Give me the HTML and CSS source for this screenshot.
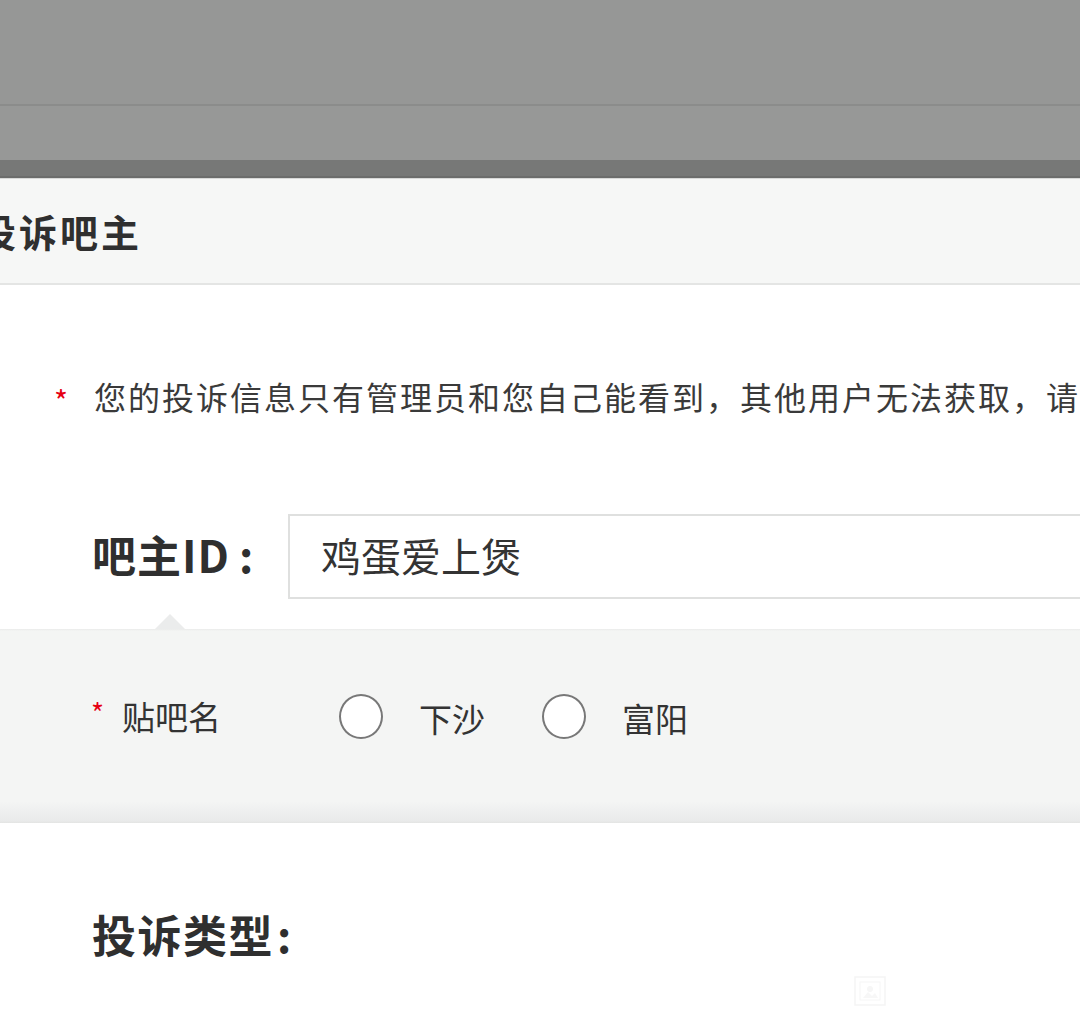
FILE: index.html
```html
<!DOCTYPE html>
<html lang="zh-CN">
<head>
<meta charset="utf-8">
<link rel="stylesheet" href="styles.css">
</head>
<body>
<div class="page">
  <div class="mask-top"></div>
  <div class="mask-mid"></div>
  <div class="mask-band"></div>
  <header class="dialog-head">
    <h1 class="dialog-title">投诉吧主</h1>
  </header>
  <section class="main">
    <p class="notice"><span class="star">*</span><span class="notice-text">您的投诉信息只有管理员和您自己能看到，其他用户无法获取，请放心填写</span></p>
    <div class="id-row">
      <span class="id-label">吧主ID<span class="colon">:</span></span>
      <div class="id-input">鸡蛋爱上煲</div>
    </div>
  </section>
  <section class="panel">
    <div class="radio-row">
      <span class="star-small">*</span><span class="radio-label">贴吧名</span>
      <span class="radio"></span><span class="radio-text">下沙</span>
      <span class="radio"></span><span class="radio-text">富阳</span>
    </div>
  </section>
  <section class="type">
    <span class="type-label">投诉类型<span class="colon type-colon">:</span></span>
    <svg class="placeholder" width="32" height="30" viewBox="0 0 32 30">
      <rect x="1" y="1" width="30" height="28" fill="none" stroke="#f5f5f5" stroke-width="1.5"/>
      <rect x="6" y="6" width="20" height="18" fill="none" stroke="#f6f6f6" stroke-width="1"/>
      <circle cx="16" cy="13" r="3" fill="#f6f6f6"/>
      <path d="M9 22 L14 16 L18 20 L21 17 L24 22 Z" fill="#f7f7f7"/>
    </svg>
  </section>
</div>
</body>
</html>
```
FILE: styles.css
```css
html, body {
  margin: 0;
  padding: 0;
  background: #ffffff;
}
body {
  width: 1080px;
  height: 1020px;
  overflow: hidden;
  font-family: "Noto Sans CJK SC", "Noto Sans", sans-serif;
  color: #333333;
}
.page {
  width: 1080px;
  overflow: hidden;
  white-space: nowrap;
}
.mask-top {
  height: 104px;
  background: #969796;
  border-bottom: 2px solid #8b8c8b;
}
.mask-mid {
  height: 54px;
  background: #979897;
}
.mask-band {
  height: 16px;
  background: #777877;
  border-bottom: 2px solid #6c6d6c;
  box-shadow: 0 1px 0 #cfd0cf;
}
.dialog-head {
  height: 104px;
  background: #f6f7f6;
  border-top: 1px solid #d8d9d8;
  border-bottom: 2px solid #e4e5e4;
  display: flex;
  align-items: center;
}
.dialog-title {
  margin: 0 0 0 -22px;
  font-size: 38px;
  letter-spacing: 3px;
  font-weight: 700;
  line-height: 44px;
  color: #2f2f2f;
}
.main {
  padding: 91px 0 30px 0;
}
.notice {
  margin: 0;
  height: 40px;
  display: flex;
  align-items: center;
  font-size: 32px;
  line-height: 40px;
  color: #3a3a3a;
}
.star {
  flex: none;
  color: #e60012;
  font-size: 30px;
  margin-left: 54px;
  width: 40px;
  line-height: 40px;
  padding-top: 8px;
}
.notice-text {
  flex: none;
  letter-spacing: 2px;
}
.id-row {
  margin-top: 98px;
  display: flex;
  align-items: center;
  height: 85px;
}
.id-label {
  flex: none;
  width: 288px;
  padding-left: 92px;
  box-sizing: border-box;
  font-size: 44px;
  letter-spacing: 1px;
  font-weight: 700;
  line-height: 48px;
  color: #2f2f2f;
  margin-top: -6px;
}
.colon {
  margin-left: 9px;
}
.type-colon {
  margin-left: 3px;
}
.id-input {
  flex: none;
  width: 900px;
  height: 85px;
  box-sizing: border-box;
  border: 2px solid #dfe0df;
  background: #ffffff;
  padding-left: 31px;
  font-size: 40px;
  line-height: 79px;
  color: #333333;
}
.panel {
  position: relative;
  height: 194px;
  box-sizing: border-box;
  background: linear-gradient(to bottom, #eaebea 0, #f4f5f4 2px, #f4f5f4 172px, #e9eaea 192px, #e3e4e3 194px);
  padding-top: 64px;
}
.panel::before {
  content: "";
  position: absolute;
  left: 155px;
  top: -15px;
  width: 0;
  height: 0;
  border-left: 15px solid transparent;
  border-right: 15px solid transparent;
  border-bottom: 15px solid #ebecec;
}
.radio-row {
  display: flex;
  align-items: center;
  height: 46px;
  font-size: 33px;
  color: #333333;
}
.star-small {
  color: #e60012;
  padding-left: 91px;
  font-size: 28px;
  line-height: 30px;
  margin-right: 18px;
  align-self: flex-start;
  margin-top: 4px;
}
.radio-label {
  width: 217px;
  line-height: 46px;
}
.radio {
  flex: none;
  width: 44px;
  height: 45px;
  box-sizing: border-box;
  border: 2.5px solid #787878;
  border-radius: 50%;
  background: #ffffff;
  margin-right: 36px;
}
.radio-text {
  width: 123px;
  line-height: 46px;
  padding-top: 4px;
}
.type {
  position: relative;
  height: 198px;
  display: flex;
  align-items: flex-start;
  padding-top: 87px;
  box-sizing: border-box;
}
.type-label {
  padding-left: 92px;
  font-size: 44px;
  letter-spacing: 1.5px;
  font-weight: 700;
  line-height: 48px;
  color: #2f2f2f;
}
.placeholder {
  position: absolute;
  left: 854px;
  top: 153px;
}
```
